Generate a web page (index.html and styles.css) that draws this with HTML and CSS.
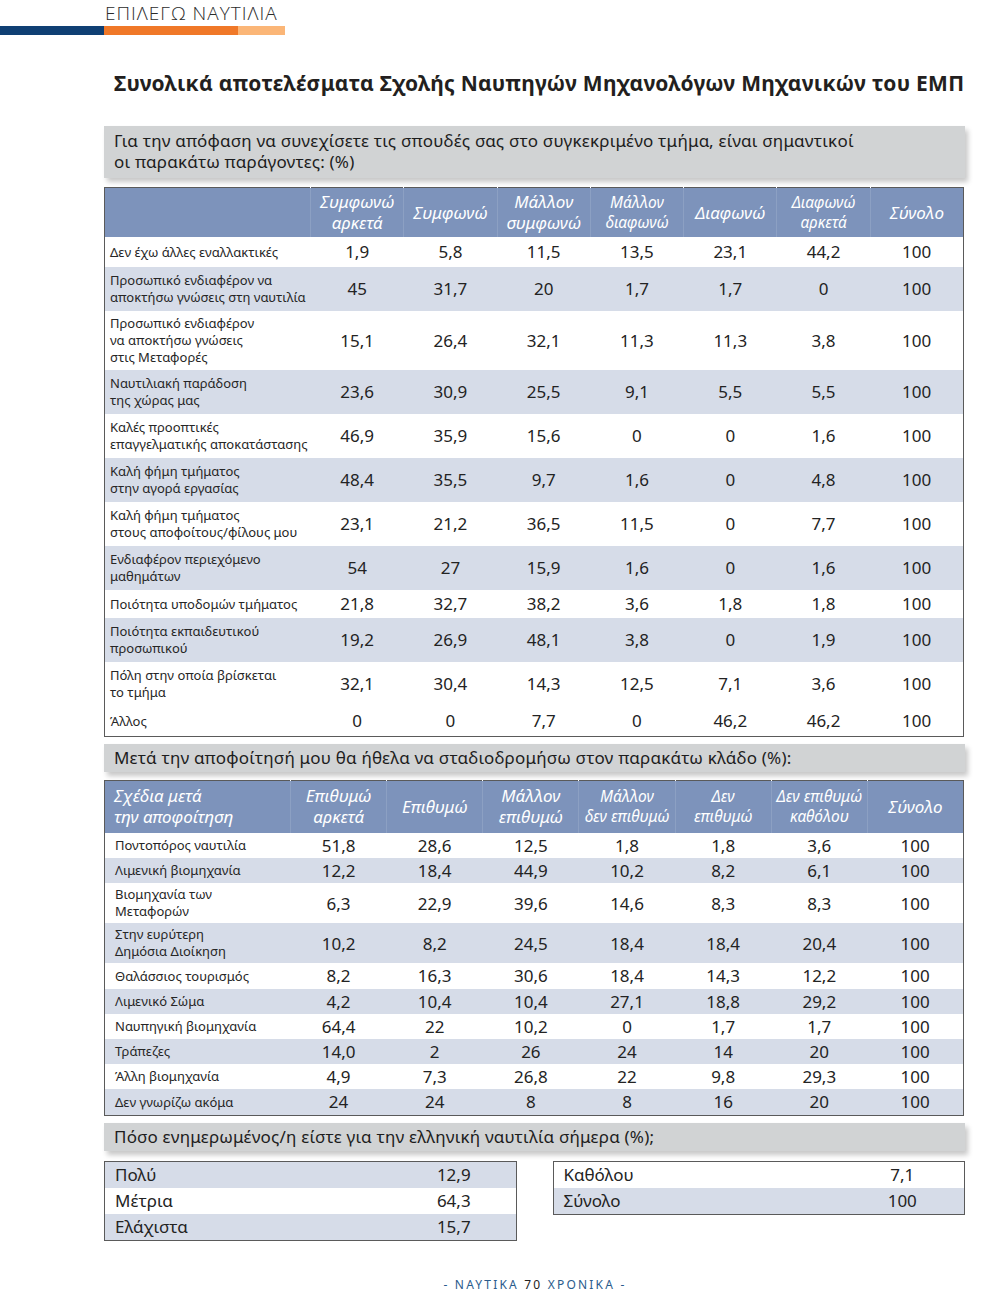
FILE: index.html
```html
<!DOCTYPE html>
<html lang="el">
<head>
<meta charset="utf-8">
<link rel="stylesheet" href="styles.css">
</head>
<body>
<header class="top">
  <div class="brand">ΕΠΙΛΕΓΩ ΝΑΥΤΙΛΙΑ</div>
  <div class="bar"><span class="b1"></span><span class="b2"></span><span class="b3"></span></div>
</header>

<main class="page">
  <h1 class="title">Συνολικά αποτελέσματα Σχολής Ναυπηγών Μηχανολόγων Μηχανικών του ΕΜΠ</h1>

  <div class="section two">Για την απόφαση να συνεχίσετε τις σπουδές σας στο συγκεκριμένο τμήμα, είναι σημαντικοί<br>οι παρακάτω παράγοντες: (%)</div>

  <table class="data t1">
    <colgroup><col class="lab1"><col><col><col><col><col><col><col></colgroup>
    <thead>
      <tr>
        <th></th>
        <th>Συμφωνώ<br>αρκετά</th>
        <th>Συμφωνώ</th>
        <th>Μάλλον<br>συμφωνώ</th>
        <th class="sm">Μάλλον<br>διαφωνώ</th>
        <th>Διαφωνώ</th>
        <th class="sm">Διαφωνώ<br>αρκετά</th>
        <th>Σύνολο</th>
      </tr>
    </thead>
    <tbody>
      <tr><td class="lab">Δεν έχω άλλες εναλλακτικές</td><td>1,9</td><td>5,8</td><td>11,5</td><td>13,5</td><td>23,1</td><td>44,2</td><td>100</td></tr>
      <tr class="alt"><td class="lab">Προσωπικό ενδιαφέρον να<br>αποκτήσω γνώσεις στη ναυτιλία</td><td>45</td><td>31,7</td><td>20</td><td>1,7</td><td>1,7</td><td>0</td><td>100</td></tr>
      <tr class="tight"><td class="lab">Προσωπικό ενδιαφέρον<br>να αποκτήσω γνώσεις<br>στις Μεταφορές</td><td>15,1</td><td>26,4</td><td>32,1</td><td>11,3</td><td>11,3</td><td>3,8</td><td>100</td></tr>
      <tr class="alt"><td class="lab">Ναυτιλιακή παράδοση<br>της χώρας μας</td><td>23,6</td><td>30,9</td><td>25,5</td><td>9,1</td><td>5,5</td><td>5,5</td><td>100</td></tr>
      <tr><td class="lab">Καλές προοπτικές<br>επαγγελματικής αποκατάστασης</td><td>46,9</td><td>35,9</td><td>15,6</td><td>0</td><td>0</td><td>1,6</td><td>100</td></tr>
      <tr class="alt"><td class="lab">Καλή φήμη τμήματος<br>στην αγορά εργασίας</td><td>48,4</td><td>35,5</td><td>9,7</td><td>1,6</td><td>0</td><td>4,8</td><td>100</td></tr>
      <tr><td class="lab">Καλή φήμη τμήματος<br>στους αποφοίτους/φίλους μου</td><td>23,1</td><td>21,2</td><td>36,5</td><td>11,5</td><td>0</td><td>7,7</td><td>100</td></tr>
      <tr class="alt"><td class="lab">Ενδιαφέρον περιεχόμενο<br>μαθημάτων</td><td>54</td><td>27</td><td>15,9</td><td>1,6</td><td>0</td><td>1,6</td><td>100</td></tr>
      <tr class="single"><td class="lab">Ποιότητα υποδομών τμήματος</td><td>21,8</td><td>32,7</td><td>38,2</td><td>3,6</td><td>1,8</td><td>1,8</td><td>100</td></tr>
      <tr class="alt"><td class="lab">Ποιότητα εκπαιδευτικού<br>προσωπικού</td><td>19,2</td><td>26,9</td><td>48,1</td><td>3,8</td><td>0</td><td>1,9</td><td>100</td></tr>
      <tr><td class="lab">Πόλη στην οποία βρίσκεται<br>το τμήμα</td><td>32,1</td><td>30,4</td><td>14,3</td><td>12,5</td><td>7,1</td><td>3,6</td><td>100</td></tr>
      <tr class="last"><td class="lab">Άλλος</td><td>0</td><td>0</td><td>7,7</td><td>0</td><td>46,2</td><td>46,2</td><td>100</td></tr>
    </tbody>
  </table>

  <div class="section">Μετά την αποφοίτησή μου θα ήθελα να σταδιοδρομήσω στον παρακάτω κλάδο (%):</div>

  <table class="data t2">
    <colgroup><col class="lab2"><col><col><col><col><col><col><col></colgroup>
    <thead>
      <tr>
        <th class="left">Σχέδια μετά<br>την αποφοίτηση</th>
        <th>Επιθυμώ<br>αρκετά</th>
        <th>Επιθυμώ</th>
        <th>Μάλλον<br>επιθυμώ</th>
        <th class="sm">Μάλλον<br>δεν επιθυμώ</th>
        <th class="sm">Δεν<br>επιθυμώ</th>
        <th class="sm">Δεν επιθυμώ<br>καθόλου</th>
        <th>Σύνολο</th>
      </tr>
    </thead>
    <tbody>
      <tr><td class="lab">Ποντοπόρος ναυτιλία</td><td>51,8</td><td>28,6</td><td>12,5</td><td>1,8</td><td>1,8</td><td>3,6</td><td>100</td></tr>
      <tr class="alt"><td class="lab">Λιμενική βιομηχανία</td><td>12,2</td><td>18,4</td><td>44,9</td><td>10,2</td><td>8,2</td><td>6,1</td><td>100</td></tr>
      <tr><td class="lab">Βιομηχανία των<br>Μεταφορών</td><td>6,3</td><td>22,9</td><td>39,6</td><td>14,6</td><td>8,3</td><td>8,3</td><td>100</td></tr>
      <tr class="alt"><td class="lab">Στην ευρύτερη<br>Δημόσια Διοίκηση</td><td>10,2</td><td>8,2</td><td>24,5</td><td>18,4</td><td>18,4</td><td>20,4</td><td>100</td></tr>
      <tr><td class="lab">Θαλάσσιος τουρισμός</td><td>8,2</td><td>16,3</td><td>30,6</td><td>18,4</td><td>14,3</td><td>12,2</td><td>100</td></tr>
      <tr class="alt"><td class="lab">Λιμενικό Σώμα</td><td>4,2</td><td>10,4</td><td>10,4</td><td>27,1</td><td>18,8</td><td>29,2</td><td>100</td></tr>
      <tr><td class="lab">Ναυπηγική βιομηχανία</td><td>64,4</td><td>22</td><td>10,2</td><td>0</td><td>1,7</td><td>1,7</td><td>100</td></tr>
      <tr class="alt"><td class="lab">Τράπεζες</td><td>14,0</td><td>2</td><td>26</td><td>24</td><td>14</td><td>20</td><td>100</td></tr>
      <tr><td class="lab">Άλλη βιομηχανία</td><td>4,9</td><td>7,3</td><td>26,8</td><td>22</td><td>9,8</td><td>29,3</td><td>100</td></tr>
      <tr class="alt"><td class="lab">Δεν γνωρίζω ακόμα</td><td>24</td><td>24</td><td>8</td><td>8</td><td>16</td><td>20</td><td>100</td></tr>
    </tbody>
  </table>

  <div class="section">Πόσο ενημερωμένος/η είστε για την ελληνική ναυτιλία σήμερα (%);</div>

  <div class="pair">
    <table class="mini">
      <tr class="alt"><td>Πολύ</td><td class="num">12,9</td></tr>
      <tr><td>Μέτρια</td><td class="num">64,3</td></tr>
      <tr class="alt"><td>Ελάχιστα</td><td class="num">15,7</td></tr>
    </table>
    <table class="mini">
      <tr><td>Καθόλου</td><td class="num">7,1</td></tr>
      <tr class="alt"><td>Σύνολο</td><td class="num">100</td></tr>
    </table>
  </div>
</main>

<footer class="foot">- ΝΑΥΤΙΚΑ <span class="dark">70</span> ΧΡΟΝΙΚΑ -</footer>
</body>
</html>
```

FILE: styles.css
```css
* { box-sizing: border-box; }
html, body { margin: 0; padding: 0; background: #fff; }
body {
  width: 988px;
  height: 1291px;
  font-family: "Noto Sans", "DejaVu Sans", sans-serif;
  color: #231f20;
  position: relative;
  overflow: hidden;
}

.brand {
  margin-left: 105px;
  height: 26px;
  padding-top: 4px;
  font-family: "Open Sans", "Noto Sans", sans-serif;
  font-weight: 300;
  font-size: 19px;
  line-height: 19px;
  letter-spacing: 1px;
  color: #2b2b2b;
}
.bar { display: flex; height: 9px; }
.bar span { display: block; height: 9px; }
.b1 { width: 104px; background: #0f3f73; }
.b2 { width: 134px; background: #f07828; }
.b3 { width: 47px; background: #fbb677; }

.page {
  margin-left: 104px;
  width: 861px;
}

.title {
  margin: 35px 0 0 10px;
  font-size: 21px;
  font-weight: 700;
  line-height: 26px;
  letter-spacing: 0.28px;
  color: #231f20;
  white-space: nowrap;
}

.section {
  margin-top: 7px;
  background: #d1d3d4;
  padding: 4px 10px;
  font-size: 17px;
  line-height: 20px;
  letter-spacing: 0.2px;
  color: #1d1d1d;
  box-shadow: 3px 4px 5px rgba(0,0,0,0.22);
  width: 861px;
  white-space: nowrap;
}
.section.two { margin-top: 30px; padding: 4px 10px 6px; line-height: 21px; }

.data {
  margin-top: 9px;
  width: 860px;
  border-collapse: collapse;
  table-layout: fixed;
  border: 1px solid #5a5a5a;
}
.data col.lab1 { width: 206px; }
.data col.lab2 { width: 186px; }

.data th {
  background: #7d93bb;
  color: #fff;
  font-style: italic;
  font-weight: 400;
  font-size: 17px;
  line-height: 21px;
  padding: 3px 0 4px;
  text-align: center;
  border-left: 1px solid rgba(255,255,255,0.12);
}
.data th:first-child { border-left: none; }
.data th.sm { font-size: 15.5px; line-height: 20px; }
.data th.left { text-align: left; padding-left: 9px; }

.data td {
  padding: 5px 0;
  font-size: 17px;
  line-height: 20px;
  text-align: center;
  color: #232323;
  vertical-align: middle;
}
.data tr.alt td { background: #d6dce8; }
.data tr.tight td { padding-top: 4px; padding-bottom: 4px; }
.data tr.single td { padding-top: 4px; padding-bottom: 4px; }
.data tr.last td { padding-top: 5px; padding-bottom: 5px; }

.data td.lab {
  text-align: left;
  font-size: 13px;
  line-height: 17px;
  padding-left: 5px;
  color: #262626;
  white-space: nowrap;
}

.t2 { margin-top: 8px; }
.t2 th { padding: 4px 0 6px; }
.t2 td { padding-top: 3px; padding-bottom: 3px; line-height: 19.2px; }
.t2 td.lab { padding-left: 10px; line-height: 17px; }

.pair {
  margin-top: 10px;
  display: flex;
  gap: 36px;
  align-items: flex-start;
}
.mini {
  width: 413px;
  border-collapse: collapse;
  border: 1px solid #5a5a5a;
  table-layout: fixed;
}
.mini td {
  font-size: 17px;
  line-height: 20px;
  padding: 3px 0 3px 10px;
  color: #232323;
}
.mini td.num { width: 124px; text-align: center; padding-left: 0; }
.mini tr.alt td { background: #d6dce8; }

.foot {
  position: absolute;
  left: 0;
  right: 0;
  top: 1279px;
  text-align: center;
  font-family: "Noto Sans", sans-serif;
  font-size: 12px;
  line-height: 12px;
  letter-spacing: 2.2px;
  color: #2a5b8c;
  padding-left: 82px;
}
.foot .dark { color: #222; }
```
